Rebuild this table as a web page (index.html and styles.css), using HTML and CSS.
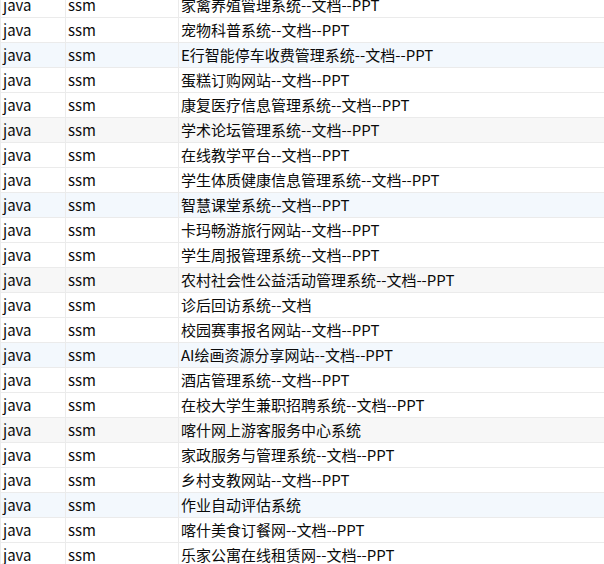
FILE: index.html
```html
<!DOCTYPE html>
<html lang="zh">
<head>
<meta charset="utf-8">
<link rel="stylesheet" href="styles.css">
</head>
<body>
<div class="grid">
  <div class="row"><div class="c c1">java</div><div class="c c2">ssm</div><div class="c c3">家禽养殖管理系统--文档--PPT</div></div>
  <div class="row"><div class="c c1">java</div><div class="c c2">ssm</div><div class="c c3">宠物科普系统--文档--PPT</div></div>
  <div class="row blue"><div class="c c1">java</div><div class="c c2">ssm</div><div class="c c3">E行智能停车收费管理系统--文档--PPT</div></div>
  <div class="row"><div class="c c1">java</div><div class="c c2">ssm</div><div class="c c3">蛋糕订购网站--文档--PPT</div></div>
  <div class="row"><div class="c c1">java</div><div class="c c2">ssm</div><div class="c c3">康复医疗信息管理系统--文档--PPT</div></div>
  <div class="row gray"><div class="c c1">java</div><div class="c c2">ssm</div><div class="c c3">学术论坛管理系统--文档--PPT</div></div>
  <div class="row"><div class="c c1">java</div><div class="c c2">ssm</div><div class="c c3">在线教学平台--文档--PPT</div></div>
  <div class="row"><div class="c c1">java</div><div class="c c2">ssm</div><div class="c c3">学生体质健康信息管理系统--文档--PPT</div></div>
  <div class="row blue"><div class="c c1">java</div><div class="c c2">ssm</div><div class="c c3">智慧课堂系统--文档--PPT</div></div>
  <div class="row"><div class="c c1">java</div><div class="c c2">ssm</div><div class="c c3">卡玛畅游旅行网站--文档--PPT</div></div>
  <div class="row"><div class="c c1">java</div><div class="c c2">ssm</div><div class="c c3">学生周报管理系统--文档--PPT</div></div>
  <div class="row gray"><div class="c c1">java</div><div class="c c2">ssm</div><div class="c c3">农村社会性公益活动管理系统--文档--PPT</div></div>
  <div class="row"><div class="c c1">java</div><div class="c c2">ssm</div><div class="c c3">诊后回访系统--文档</div></div>
  <div class="row"><div class="c c1">java</div><div class="c c2">ssm</div><div class="c c3">校园赛事报名网站--文档--PPT</div></div>
  <div class="row blue"><div class="c c1">java</div><div class="c c2">ssm</div><div class="c c3">AI绘画资源分享网站--文档--PPT</div></div>
  <div class="row"><div class="c c1">java</div><div class="c c2">ssm</div><div class="c c3">酒店管理系统--文档--PPT</div></div>
  <div class="row"><div class="c c1">java</div><div class="c c2">ssm</div><div class="c c3">在校大学生兼职招聘系统--文档--PPT</div></div>
  <div class="row gray"><div class="c c1">java</div><div class="c c2">ssm</div><div class="c c3">喀什网上游客服务中心系统</div></div>
  <div class="row"><div class="c c1">java</div><div class="c c2">ssm</div><div class="c c3">家政服务与管理系统--文档--PPT</div></div>
  <div class="row"><div class="c c1">java</div><div class="c c2">ssm</div><div class="c c3">乡村支教网站--文档--PPT</div></div>
  <div class="row blue"><div class="c c1">java</div><div class="c c2">ssm</div><div class="c c3">作业自动评估系统</div></div>
  <div class="row"><div class="c c1">java</div><div class="c c2">ssm</div><div class="c c3">喀什美食订餐网--文档--PPT</div></div>
  <div class="row"><div class="c c1">java</div><div class="c c2">ssm</div><div class="c c3">乐家公寓在线租赁网--文档--PPT</div></div>
</div>
</body>
</html>
```
FILE: styles.css
```css
html, body {
  margin: 0;
  padding: 0;
  background: #ffffff;
  overflow: hidden;
}
body {
  font-family: "Noto Sans CJK SC", "Noto Sans", sans-serif;
  font-size: 15px;
  color: #0a0a0a;
}
.grid {
  margin-top: -7px;
}
.row {
  display: grid;
  grid-template-columns: 66px 113px 1fr;
  height: 25px;
  border-bottom: 1px solid #ebebeb;
  box-sizing: border-box;
  background: #fff;
}
.row.blue { background: #f3f8fd; }
.row.gray { background: #f7f7f7; }
.c {
  box-sizing: border-box;
  padding-left: 2px;
  line-height: 24px;
  white-space: nowrap;
  border-right: 1px solid #ebebeb;
}
.c1 { border-left: 1px solid #ebebeb; }
.c3 { border-right: none; }
```
